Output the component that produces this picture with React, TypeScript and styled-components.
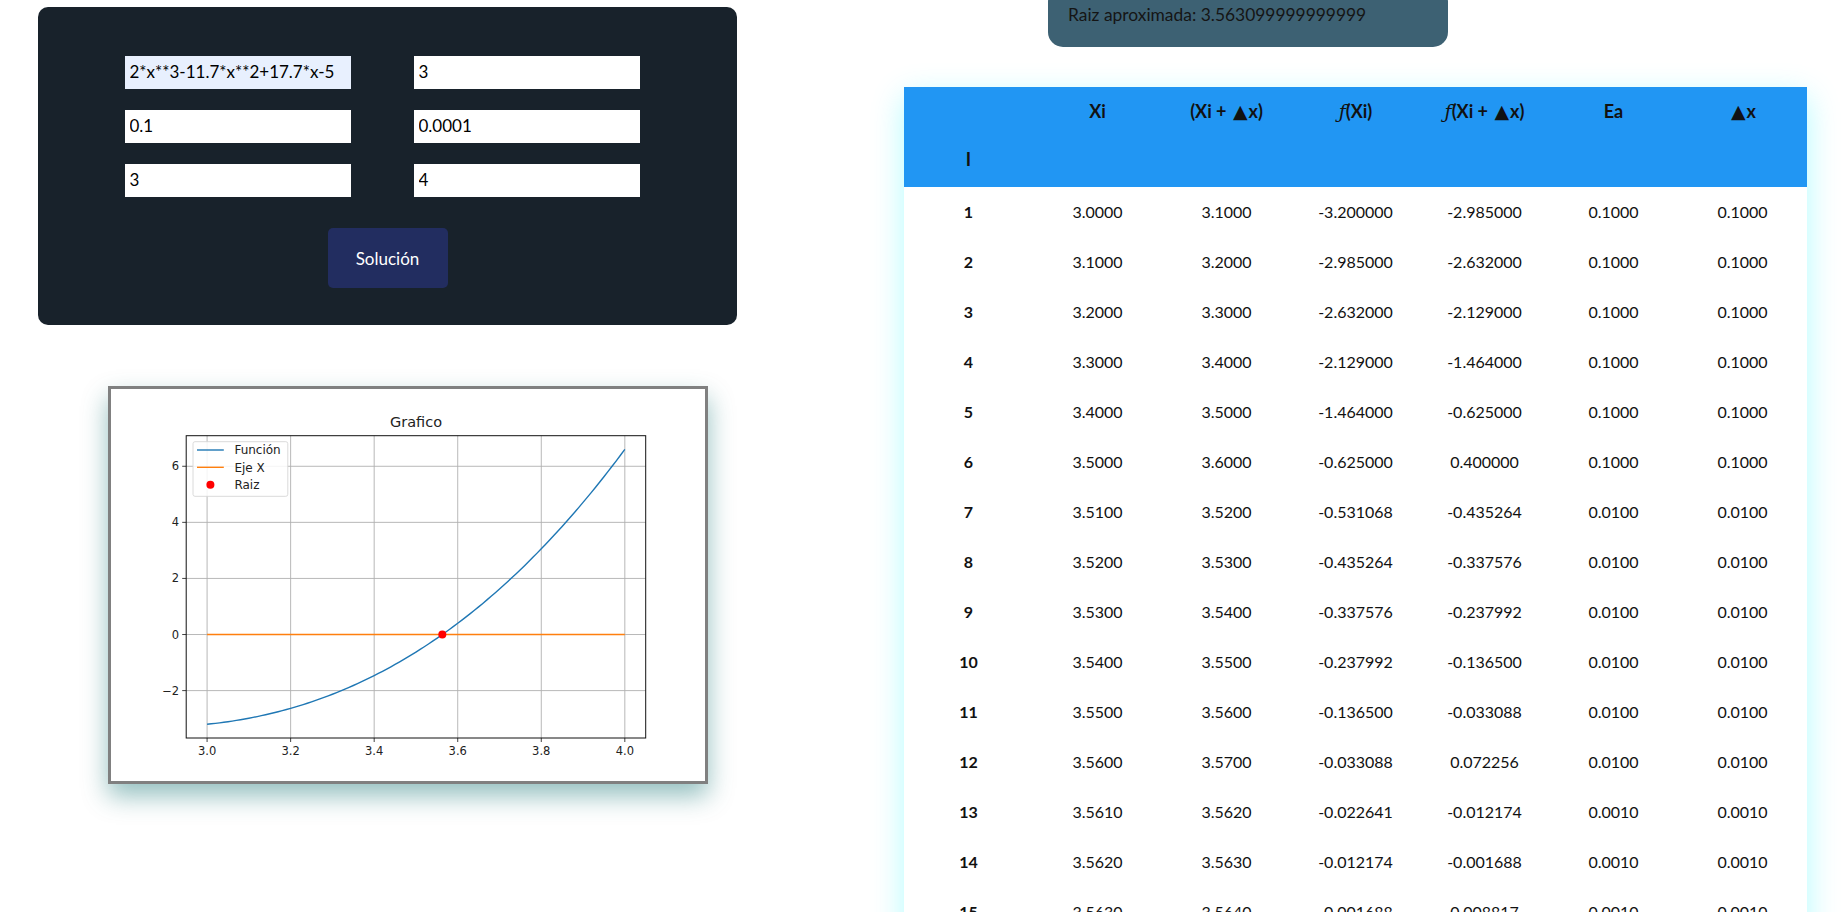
import React from "react";
import styled, { createGlobalStyle } from "styled-components";

const GlobalStyle = createGlobalStyle`
  html, body { margin: 0; padding: 0; background: #ffffff; }
  body { font-family: Lato, "Open Sans", "DejaVu Sans", sans-serif; color: #111; overflow: hidden; }
  * { box-sizing: border-box; }
`;

const Page = styled.div`
  display: flex;
  align-items: flex-start;
  width: 1843px;
  height: 912px;
  overflow: hidden;
`;

const LeftCol = styled.div`
  flex: 0 0 904px;
  display: flex;
  flex-direction: column;
  padding-top: 7px;
`;

const Card = styled.div`
  margin-left: 38px;
  width: 699px;
  background: #18222b;
  border-radius: 10px;
  padding: 49px 0 37px 0;
  display: flex;
  flex-direction: column;
  align-items: center;
`;

const FormGrid = styled.div`
  display: grid;
  grid-template-columns: 226px 226px;
  column-gap: 63px;
  row-gap: 21px;
  margin-left: -11px;
`;

const Field = styled.input<{ $filled?: boolean }>`
  width: 226px;
  height: 33px;
  border: none;
  outline: none;
  padding: 0 5px 3px 5px;
  font-family: Lato, "Open Sans", sans-serif;
  font-size: 17px;
  color: #000;
  background: ${(p) => (p.$filled ? "#e8f0fe" : "#ffffff")};
`;

const SolveButton = styled.button`
  margin-top: 31px;
  width: 120px;
  height: 60px;
  border: none;
  border-radius: 5px;
  background: #222d60;
  color: #ffffff;
  font-family: Lato, "Open Sans", sans-serif;
  font-size: 17px;
  cursor: pointer;
`;

const ChartFrame = styled.div`
  margin-left: 108px;
  margin-top: 61px;
  width: 600px;
  height: 398px;
  border: 3px solid #808080;
  background: #ffffff;
  box-shadow: 0 12px 24px rgba(0, 105, 105, 0.42);
  display: flex;
`;

const RightCol = styled.div`
  flex: 1;
  display: flex;
  flex-direction: column;
`;

const RootPill = styled.div`
  margin-left: 144px;
  margin-top: -13px;
  width: 400px;
  height: 60px;
  border-radius: 15px;
  background: #3d6173;
  padding: 18px 20px 0 20px;
  font-size: 17.4px;
  line-height: 20px;
  color: #151515;
`;

const TableWrap = styled.div`
  margin-top: 40px;
  width: 903px;
  background: #ffffff;
  box-shadow: 0 10px 30px rgba(0, 245, 255, 0.3);
`;

const Table = styled.table`
  width: 903px;
  border-collapse: collapse;
  table-layout: fixed;
  font-size: 16px;
`;

const HeadRow = styled.tr`
  background: #2196f3;
  height: 100px;
`;

const Th = styled.th<{ $bottom?: boolean }>`
  font-weight: 700;
  font-size: 18px;
  color: #111;
  text-align: center;
  line-height: 20px;
  white-space: nowrap;
  vertical-align: ${(p) => (p.$bottom ? "bottom" : "top")};
  padding: ${(p) => (p.$bottom ? "0 0 18px 0" : "14px 0 0 0")};
`;

const Tri = styled.span`
  font-family: "DejaVu Sans", sans-serif;
  font-size: 19px;
  line-height: 20px;
  margin: 0 1px 0 2px;
`;

const Fn = styled.span`
  font-family: "DejaVu Serif", serif;
  font-style: italic;
  font-weight: 400;
  font-size: 19px;
  line-height: 20px;
`;

const BodyRow = styled.tr`
  height: 50px;
`;

const Td = styled.td<{ $index?: boolean }>`
  text-align: center;
  vertical-align: middle;
  padding: 0;
  line-height: 20px;
  font-weight: ${(p) => (p.$index ? 700 : 400)};
  color: #111;
`;

const rows: string[][] = [
  ["3.0000", "3.1000", "-3.200000", "-2.985000", "0.1000", "0.1000"],
  ["3.1000", "3.2000", "-2.985000", "-2.632000", "0.1000", "0.1000"],
  ["3.2000", "3.3000", "-2.632000", "-2.129000", "0.1000", "0.1000"],
  ["3.3000", "3.4000", "-2.129000", "-1.464000", "0.1000", "0.1000"],
  ["3.4000", "3.5000", "-1.464000", "-0.625000", "0.1000", "0.1000"],
  ["3.5000", "3.6000", "-0.625000", "0.400000", "0.1000", "0.1000"],
  ["3.5100", "3.5200", "-0.531068", "-0.435264", "0.0100", "0.0100"],
  ["3.5200", "3.5300", "-0.435264", "-0.337576", "0.0100", "0.0100"],
  ["3.5300", "3.5400", "-0.337576", "-0.237992", "0.0100", "0.0100"],
  ["3.5400", "3.5500", "-0.237992", "-0.136500", "0.0100", "0.0100"],
  ["3.5500", "3.5600", "-0.136500", "-0.033088", "0.0100", "0.0100"],
  ["3.5600", "3.5700", "-0.033088", "0.072256", "0.0100", "0.0100"],
  ["3.5610", "3.5620", "-0.022641", "-0.012174", "0.0010", "0.0010"],
  ["3.5620", "3.5630", "-0.012174", "-0.001688", "0.0010", "0.0010"],
  ["3.5630", "3.5640", "-0.001688", "0.008817", "0.0010", "0.0010"],
  ["3.5630", "3.5631", "-0.001688", "-0.000636", "0.0001", "0.0001"],
];

const f = (x: number) => 2 * x ** 3 - 11.7 * x ** 2 + 17.7 * x - 5;

// chart geometry (inner frame 594 x 392)
const AX_L = 75.2;
const AX_R = 534.7;
const AX_T = 46.7;
const AX_B = 349;
const X0 = 2.95;
const X1 = 4.05;
const Y0 = -3.69;
const Y1 = 7.09;
const px = (x: number) => AX_L + ((x - X0) / (X1 - X0)) * (AX_R - AX_L);
const py = (y: number) => AX_T + ((Y1 - y) / (Y1 - Y0)) * (AX_B - AX_T);

const Chart: React.FC = () => {
  const pts: string[] = [];
  for (let i = 0; i <= 100; i++) {
    const x = 3 + i / 100;
    pts.push(`${px(x).toFixed(2)},${py(f(x)).toFixed(2)}`);
  }
  const xTicks = [3.0, 3.2, 3.4, 3.6, 3.8, 4.0];
  const yTicks = [-2, 0, 2, 4, 6];
  const tickFont = { fontFamily: "'DejaVu Sans', sans-serif", fontSize: 11.5, fill: "#222" };
  const legendFont = { fontFamily: "'DejaVu Sans', sans-serif", fontSize: 12, fill: "#222" };
  return (
    <svg width="594" height="392" viewBox="0 0 594 392">
      <rect x="0" y="0" width="594" height="392" fill="#fff" />
      <text x="305" y="38" textAnchor="middle" style={{ fontFamily: "'DejaVu Sans', sans-serif", fontSize: 14.5, fill: "#222" }}>
        Grafico
      </text>
      {xTicks.map((t) => (
        <line key={"gx" + t} x1={px(t)} x2={px(t)} y1={AX_T} y2={AX_B} stroke="#b0b0b0" strokeWidth="0.9" />
      ))}
      {yTicks.map((t) => (
        <line key={"gy" + t} x1={AX_L} x2={AX_R} y1={py(t)} y2={py(t)} stroke="#b0b0b0" strokeWidth="0.9" />
      ))}
      <line x1={px(3)} x2={px(4)} y1={py(0)} y2={py(0)} stroke="#ff7f0e" strokeWidth="1.4" />
      <polyline points={pts.join(" ")} fill="none" stroke="#1f77b4" strokeWidth="1.4" />
      <circle cx={px(3.5631)} cy={py(0)} r="4" fill="#ff0000" />
      <rect x={AX_L} y={AX_T} width={AX_R - AX_L} height={AX_B - AX_T} fill="none" stroke="#111" strokeWidth="1" />
      {xTicks.map((t) => (
        <g key={"tx" + t}>
          <line x1={px(t)} x2={px(t)} y1={AX_B} y2={AX_B + 4} stroke="#111" strokeWidth="0.8" />
          <text x={px(t)} y={AX_B + 17} textAnchor="middle" style={tickFont}>
            {t.toFixed(1)}
          </text>
        </g>
      ))}
      {yTicks.map((t) => (
        <g key={"ty" + t}>
          <line x1={AX_L - 4} x2={AX_L} y1={py(t)} y2={py(t)} stroke="#111" strokeWidth="0.8" />
          <text x={AX_L - 7} y={py(t) + 4} textAnchor="end" style={tickFont}>
            {t < 0 ? `\u2212${Math.abs(t)}` : `${t}`}
          </text>
        </g>
      ))}
      <rect x="82" y="52.7" width="94.8" height="54.6" rx="2" fill="#fff" fillOpacity="0.85" stroke="#d6d6d6" strokeWidth="0.9" />
      <line x1="86" x2="112.8" y1="61" y2="61" stroke="#1f77b4" strokeWidth="1.4" />
      <line x1="86" x2="112.8" y1="78.3" y2="78.3" stroke="#ff7f0e" strokeWidth="1.4" />
      <circle cx="99.4" cy="95.7" r="4" fill="#ff0000" />
      <text x="123.4" y="65.3" style={legendFont}>Función</text>
      <text x="123.4" y="82.6" style={legendFont}>Eje X</text>
      <text x="123.4" y="100" style={legendFont}>Raiz</text>
    </svg>
  );
};

const T = () => <Tri>{"\u25B2"}</Tri>;
const F = () => <Fn>{"\u0192"}</Fn>;

export default function App() {
  return (
    <>
      <GlobalStyle />
      <Page>
        <LeftCol>
          <Card>
            <FormGrid>
              <Field $filled defaultValue="2*x**3-11.7*x**2+17.7*x-5" />
              <Field defaultValue="3" />
              <Field defaultValue="0.1" />
              <Field defaultValue="0.0001" />
              <Field defaultValue="3" />
              <Field defaultValue="4" />
            </FormGrid>
            <SolveButton>Solución</SolveButton>
          </Card>
          <ChartFrame>
            <Chart />
          </ChartFrame>
        </LeftCol>
        <RightCol>
          <RootPill>Raiz aproximada: 3.563099999999999</RootPill>
          <TableWrap>
            <Table>
              <thead>
                <HeadRow>
                  <Th $bottom>I</Th>
                  <Th>Xi</Th>
                  <Th>
                    (Xi + <T />x)
                  </Th>
                  <Th>
                    <F />(Xi)
                  </Th>
                  <Th>
                    <F />(Xi + <T />x)
                  </Th>
                  <Th>Ea</Th>
                  <Th>
                    <T />x
                  </Th>
                </HeadRow>
              </thead>
              <tbody>
                {rows.map((r, i) => (
                  <BodyRow key={i}>
                    <Td $index>{i + 1}</Td>
                    {r.map((c, j) => (
                      <Td key={j}>{c}</Td>
                    ))}
                  </BodyRow>
                ))}
              </tbody>
            </Table>
          </TableWrap>
        </RightCol>
      </Page>
    </>
  );
}
